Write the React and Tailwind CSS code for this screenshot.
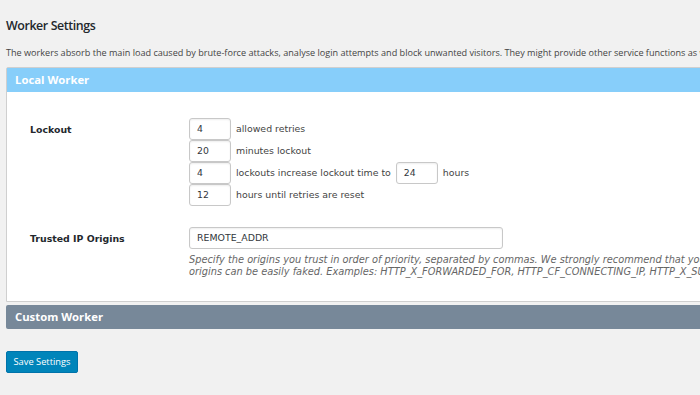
import React from "react";

const seg = { fontFamily: '"Open Sans", "Noto Sans", sans-serif' };
const ver = { fontFamily: '"DejaVu Sans", Verdana, sans-serif' };

function NumInput({ value }) {
  return (
    <div
      className="w-[42px] h-[22px] border border-[#c8c8c8] rounded-[3px] bg-white shadow-[inset_0_1px_2px_rgba(0,0,0,0.07)] flex items-center pl-[7px] text-[9.3px] text-[#32373c]"
      style={ver}
    >
      {value}
    </div>
  );
}

export default function App() {
  return (
    <div className="w-[700px] h-[395px] overflow-hidden bg-[#f1f1f1]">
      <div className="w-[1000px] pl-[6px]">
        <h2
          className="pt-[18px] text-[12.4px] font-semibold tracking-[-0.4px] text-[#23282d] leading-[16px]"
          style={seg}
        >
          Worker Settings
        </h2>
        <p
          className="mt-[13px] text-[9.1px] text-[#444] leading-[12px] whitespace-nowrap"
          style={seg}
        >
          The workers absorb the main load caused by brute-force attacks, analyse login attempts and block unwanted visitors. They might provide other service functions as well.
        </p>

        <div className="mt-[8px] border border-[#cfcfcf] bg-white rounded-t-[2px]">
          <div
            className="h-[24px] bg-[#87cefa] flex items-center pl-[8px] text-white font-bold text-[11.3px]"
            style={seg}
          >
            Local Worker
          </div>
          <div className="pl-[23px] pt-[26px] pb-[23px] text-[9.4px] text-[#444]" style={ver}>
            <div className="flex">
              <div className="w-[159px] pt-[5px] font-bold text-[#23282d]">Lockout</div>
              <div className="flex flex-col">
                <div className="flex items-center h-[22px]">
                  <NumInput value="4" />
                  <span className="ml-[5px]">allowed retries</span>
                </div>
                <div className="flex items-center h-[22px]">
                  <NumInput value="20" />
                  <span className="ml-[5px]">minutes lockout</span>
                </div>
                <div className="flex items-center h-[22px]">
                  <NumInput value="4" />
                  <span className="ml-[5px]">lockouts increase lockout time to</span>
                  <div className="ml-[5px]">
                    <NumInput value="24" />
                  </div>
                  <span className="ml-[5px]">hours</span>
                </div>
                <div className="flex items-center h-[22px]">
                  <NumInput value="12" />
                  <span className="ml-[5px]">hours until retries are reset</span>
                </div>
              </div>
            </div>

            <div className="flex mt-[21px]">
              <div className="w-[159px] pt-[5px] font-bold text-[#23282d]">Trusted IP Origins</div>
              <div className="flex flex-col">
                <div
                  className="w-[314px] h-[22px] border border-[#c8c8c8] rounded-[3px] bg-white shadow-[inset_0_1px_2px_rgba(0,0,0,0.07)] flex items-center pl-[7px] text-[#32373c]"
                >
                  REMOTE_ADDR
                </div>
                <p className="mt-[5px] italic text-[9.8px] text-[#666] leading-[12px] whitespace-nowrap">
                  Specify the origins you trust in order of priority, separated by commas. We strongly recommend that you do not use anything other than REMOTE_ADDR since other
                  <br />
                  origins can be easily faked. Examples: HTTP_X_FORWARDED_FOR, HTTP_CF_CONNECTING_IP, HTTP_X_SUCURI_CLIENTIP
                </p>
              </div>
            </div>
          </div>
        </div>

        <div
          className="mt-[3px] h-[24px] bg-[#778899] rounded-[2px] flex items-center pl-[9px] text-white font-bold text-[11.3px]"
          style={seg}
        >
          Custom Worker
        </div>

        <button
          className="mt-[22px] h-[22px] w-[72px] bg-[#0085ba] rounded-[2px] text-white text-[9.3px] border border-[#0073aa]"
          style={seg}
        >
          Save Settings
        </button>
      </div>
    </div>
  );
}
